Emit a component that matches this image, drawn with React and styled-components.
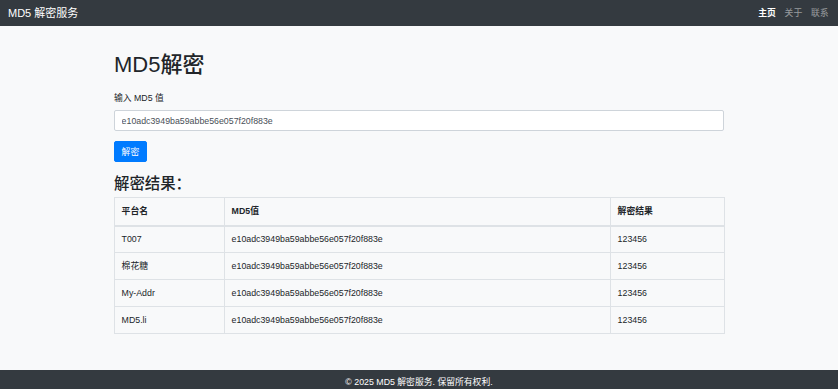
import React from "react";
import styled, { createGlobalStyle } from "styled-components";

const Global = createGlobalStyle`
  html, body { margin: 0; padding: 0; overflow: hidden; }
  body {
    background: #f8f9fa;
    color: #212529;
    font-family: "Liberation Sans", "Noto Sans CJK SC", sans-serif;
    font-size: 8.8px;
    line-height: 1.5;
  }
  * { box-sizing: border-box; }
`;

const Navbar = styled.nav`
  height: 26px;
  background: #343a40;
  display: flex;
  align-items: center;
  justify-content: space-between;
  padding: 0 5px 0 8px;
`;

const Brand = styled.a`
  color: #fff;
  font-size: 11px;
  line-height: 16px;
  text-decoration: none;
`;

const NavLinks = styled.ul`
  display: flex;
  list-style: none;
  margin: 0;
  padding: 0;
`;

const NavLink = styled.a`
  display: block;
  padding: 0 4.4px;
  font-size: 8.8px;
  line-height: 13px;
  color: ${(p) => (p.$active ? "#fff" : "rgba(255,255,255,0.5)")};
  font-weight: ${(p) => (p.$active ? 700 : 400)};
  text-decoration: none;
`;

const Main = styled.main`
  width: 610px;
  margin: 0 auto 36px;
  padding-top: 26px;
`;

const Title = styled.h1`
  font-size: 22px;
  font-weight: 500;
  line-height: 26px;
  margin: 0 0 14px;
`;

const Label = styled.label`
  display: block;
  line-height: 13px;
  margin-bottom: 5px;
`;

const Input = styled.input`
  display: block;
  width: 100%;
  height: 21px;
  padding: 0 6.6px;
  font-family: inherit;
  font-size: 8.8px;
  color: #495057;
  background: #fff;
  border: 1px solid #ced4da;
  border-radius: 2px;
  margin: 0 0 10px;
  outline: none;
`;

const Button = styled.button`
  display: block;
  height: 21px;
  padding: 0 6.6px;
  font-family: inherit;
  font-size: 8.8px;
  color: #fff;
  background: #007bff;
  border: 1px solid #007bff;
  border-radius: 2px;
`;

const SubTitle = styled.h3`
  font-size: 15.4px;
  font-weight: 500;
  line-height: 18px;
  margin: 13px 0 4px;
`;

const Table = styled.table`
  width: 100%;
  border-collapse: collapse;
  table-layout: fixed;
`;

const Th = styled.th`
  text-align: left;
  font-weight: 700;
  border: 1px solid #dee2e6;
  border-bottom-width: 2px;
  height: 28px;
  padding: 0 6.6px;
  line-height: 13px;
  width: ${(p) => p.$w || "auto"};
`;

const Td = styled.td`
  border: 1px solid #dee2e6;
  height: 27px;
  padding: 0 6.6px;
  line-height: 13px;
`;

const Footer = styled.footer`
  background: #343a40;
  color: #fff;
  text-align: center;
  padding: 6px 0 7px;
  line-height: 13px;
`;

const rows = [
  ["T007", "e10adc3949ba59abbe56e057f20f883e", "123456"],
  ["棉花糖", "e10adc3949ba59abbe56e057f20f883e", "123456"],
  ["My-Addr", "e10adc3949ba59abbe56e057f20f883e", "123456"],
  ["MD5.li", "e10adc3949ba59abbe56e057f20f883e", "123456"],
];

export default function App() {
  return (
    <>
      <Global />
      <Navbar>
        <Brand href="#">MD5 解密服务</Brand>
        <NavLinks>
          <li><NavLink $active href="#">主页</NavLink></li>
          <li><NavLink href="#">关于</NavLink></li>
          <li><NavLink href="#">联系</NavLink></li>
        </NavLinks>
      </Navbar>
      <Main>
        <Title>MD5解密</Title>
        <Label>输入 MD5 值</Label>
        <Input defaultValue="e10adc3949ba59abbe56e057f20f883e" />
        <Button>解密</Button>
        <SubTitle>解密结果：</SubTitle>
        <Table>
          <thead>
            <tr>
              <Th $w="110px">平台名</Th>
              <Th $w="386px">MD5值</Th>
              <Th $w="114px">解密结果</Th>
            </tr>
          </thead>
          <tbody>
            {rows.map((r) => (
              <tr key={r[0]}>
                <Td>{r[0]}</Td>
                <Td>{r[1]}</Td>
                <Td>{r[2]}</Td>
              </tr>
            ))}
          </tbody>
        </Table>
      </Main>
      <Footer>© 2025 MD5 解密服务. 保留所有权利.</Footer>
    </>
  );
}
